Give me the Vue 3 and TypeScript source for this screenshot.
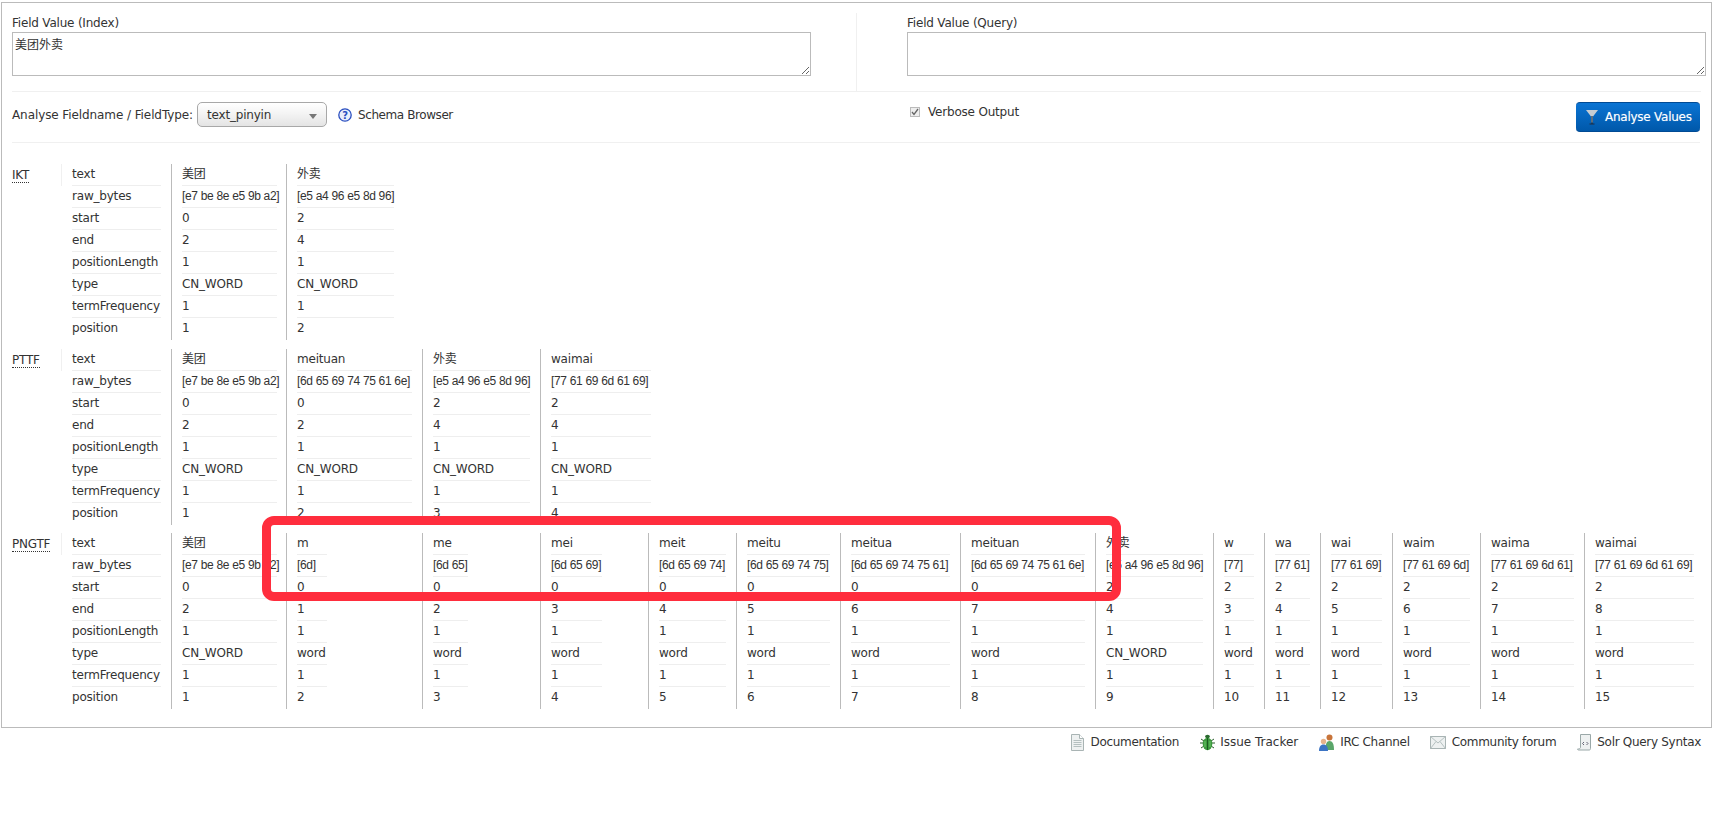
<script setup lang="ts">
interface Token {
  text: string
  raw: string
  start: number
  end: number
  type: string
  position: number
  width: number
  rule: number
}

const keys = ['text', 'raw_bytes', 'start', 'end', 'positionLength', 'type', 'termFrequency', 'position']

const tok = (
  text: string,
  raw: string,
  start: number,
  end: number,
  type: string,
  position: number,
  width: number,
  rule: number,
): Token => ({ text, raw, start, end, type, position, width, rule })

const mei = '美团'
const wai = '外卖'
const meiRaw = '[e7 be 8e e5 9b a2]'
const waiRaw = '[e5 a4 96 e5 8d 96]'

const stages: { name: string; tokens: Token[] }[] = [
  {
    name: 'IKT',
    tokens: [
      tok(mei, meiRaw, 0, 2, 'CN_WORD', 1, 115, 95),
      tok(wai, waiRaw, 2, 4, 'CN_WORD', 2, 118, 97),
    ],
  },
  {
    name: 'PTTF',
    tokens: [
      tok(mei, meiRaw, 0, 2, 'CN_WORD', 1, 115, 95),
      tok('meituan', '[6d 65 69 74 75 61 6e]', 0, 2, 'CN_WORD', 2, 136, 115),
      tok(wai, waiRaw, 2, 4, 'CN_WORD', 3, 118, 97),
      tok('waimai', '[77 61 69 6d 61 69]', 2, 4, 'CN_WORD', 4, 120, 100),
    ],
  },
  {
    name: 'PNGTF',
    tokens: [
      tok(mei, meiRaw, 0, 2, 'CN_WORD', 1, 115, 95),
      tok('m', '[6d]', 0, 1, 'word', 2, 136, 30),
      tok('me', '[6d 65]', 0, 2, 'word', 3, 118, 35),
      tok('mei', '[6d 65 69]', 0, 3, 'word', 4, 108, 51),
      tok('meit', '[6d 65 69 74]', 0, 4, 'word', 5, 88, 67),
      tok('meitu', '[6d 65 69 74 75]', 0, 5, 'word', 6, 104, 83),
      tok('meitua', '[6d 65 69 74 75 61]', 0, 6, 'word', 7, 120, 99),
      tok('meituan', '[6d 65 69 74 75 61 6e]', 0, 7, 'word', 8, 135, 114),
      tok(wai, waiRaw, 2, 4, 'CN_WORD', 9, 118, 97),
      tok('w', '[77]', 2, 3, 'word', 10, 51, 30),
      tok('wa', '[77 61]', 2, 4, 'word', 11, 56, 35),
      tok('wai', '[77 61 69]', 2, 5, 'word', 12, 72, 51),
      tok('waim', '[77 61 69 6d]', 2, 6, 'word', 13, 88, 67),
      tok('waima', '[77 61 69 6d 61]', 2, 7, 'word', 14, 104, 83),
      tok('waimai', '[77 61 69 6d 61 69]', 2, 8, 'word', 15, 110, 99),
    ],
  },
]

const cellValues = (t: Token): (string | number)[] => [t.text, t.raw, t.start, t.end, 1, t.type, 1, t.position]
</script>

<template>
  <div class="page">
    <div class="frame">
      <div class="fields">
        <div class="field field-index">
          <label>Field Value (Index)</label>
          <textarea readonly>美团外卖</textarea>
        </div>
        <div class="field field-query">
          <label>Field Value (Query)</label>
          <textarea readonly></textarea>
        </div>
      </div>

      <div class="controls">
        <div class="controls-left">
          <span class="fieldtype-label">Analyse Fieldname / FieldType:</span>
          <div class="select">
            <span>text_pinyin</span>
            <i class="select-arrow"></i>
          </div>
          <a class="schema">
            <svg width="14" height="14" viewBox="0 0 14 14">
              <circle cx="7" cy="7" r="6.2" fill="#e8eefb" stroke="#2b4fc0" stroke-width="1.3" />
              <text x="7" y="10.6" text-anchor="middle" font-size="10" font-weight="700" fill="#2b4fc0">?</text>
            </svg>
            Schema Browser
          </a>
        </div>
        <div class="verbose">
          <span class="checkbox">
            <svg width="8" height="8" viewBox="0 0 8 8">
              <path d="M1 4l2 2.4L7 1" fill="none" stroke="#666" stroke-width="1.3" />
            </svg>
          </span>
          Verbose Output
        </div>
        <button class="analyse">
          <svg width="12" height="16" viewBox="0 0 12 16">
            <path d="M0 1h12L7 7.500v6H5v-6z" fill="#c6ccd2" />
            <path d="M6 7v8" stroke="#1c2f44" stroke-width="1.2" />
            <path d="M3.500 15h5" stroke="#1c2f44" stroke-width="1" />
          </svg>
          Analyse Values
        </button>
      </div>

      <div class="analysis">
        <div v-for="stage in stages" :key="stage.name" class="stage">
          <div class="stage-name"><abbr>{{ stage.name }}</abbr></div>
          <div class="keys">
            <div v-for="k in keys" :key="k" class="cell">{{ k }}</div>
          </div>
          <div
            v-for="(t, i) in stage.tokens"
            :key="i"
            class="token"
            :style="{ width: t.width + 'px' }"
          >
            <div class="token-cells" :style="{ width: t.rule + 'px' }">
              <div
                v-for="(v, n) in cellValues(t)"
                :key="n"
                class="cell"
                :class="{ raw: n === 1 }"
              >{{ v }}</div>
            </div>
          </div>
        </div>
      </div>
    </div>

    <div class="footer">
      <a>
        <svg width="15" height="17" viewBox="0 0 15 17">
          <path d="M1.500.5h8l4 4v12h-12z" fill="#eef1f1" stroke="#a9b4b4" />
          <path d="M9.500.5v4h4" fill="#fff" stroke="#a9b4b4" />
          <path d="M3.500 6.500h8M3.500 8.500h8M3.500 10.500h8M3.500 12.500h8" stroke="#b5c0c0" />
        </svg>
        Documentation
      </a>
      <a class="issue">
        <svg width="15" height="17" viewBox="0 0 15 17">
          <path d="M1 5l3 2M14 5l-3 2M0 9h3M15 9h-3M1 14l3-2M14 14l-3-2" stroke="#2c5a2c" />
          <ellipse cx="7.500" cy="2.600" rx="2.400" ry="1.800" fill="#2a6a2e" />
          <ellipse cx="7.500" cy="10" rx="4.800" ry="6.200" fill="#3c9a3e" />
          <path d="M7.500 4v12" stroke="#1d5a22" />
          <path d="M5 7v6M10 7v6" stroke="#6cc46a" />
        </svg>
        Issue Tracker
      </a>
      <a>
        <svg width="16" height="17" viewBox="0 0 16 17">
          <circle cx="10.500" cy="3.500" r="3" fill="#c8743a" />
          <path d="M6.500 16c0-6 1-9 4-9s4.500 3 4.500 9z" fill="#5aa66a" />
          <circle cx="4.500" cy="7.500" r="2.700" fill="#e8b48c" />
          <path d="M0 17c0-4 1.500-6.500 4.500-6.500S9 13 9 17z" fill="#3c74c4" />
        </svg>
        IRC Channel
      </a>
      <a>
        <svg width="16" height="13" viewBox="0 0 16 13">
          <rect x=".5" y=".5" width="15" height="12" fill="#eef1f1" stroke="#a9b4b4" />
          <path d="M.5.500L8 7l7.500-6.500M.5 12.500L6 5.500M15.500 12.500L10 5.500" fill="none" stroke="#b5c0c0" />
        </svg>
        Community forum
      </a>
      <a>
        <svg width="15" height="17" viewBox="0 0 15 17">
          <path d="M3.500.5h10v14c0 1-.5 1.500-1.500 1.500H1.500c-.5 0-1-.5-1-1 1.500 0 3-.5 3-1.500z" fill="#eef1f1" stroke="#9aa8a8" />
          <path d="M7 8L5.500 9.500 7 11M9.500 8L11 9.500 9.500 11" fill="none" stroke="#667" />
        </svg>
        Solr Query Syntax
      </a>
    </div>

    <div class="highlight"></div>
  </div>
</template>

<style>
html,
body {
  background: #fff;
}
</style>

<style scoped>
.page {
  position: relative;
  height: 820px;
  overflow: hidden;
  font-family: 'DejaVu Sans', 'Noto Sans CJK SC', sans-serif;
  font-size: 12px;
  letter-spacing: -0.2px;
  color: #333;
}

.frame {
  box-sizing: border-box;
  width: 1711px;
  height: 726px;
  margin: 2px 0 0 1px;
  padding: 10px 10px 0;
  border: 1px solid #bbb;
}

.fields {
  display: flex;
  height: 78px;
  border-bottom: 1px solid #f0f0f0;
}

.field {
  flex: none;
}

.field label {
  display: block;
  height: 19px;
  padding-top: 1px;
  box-sizing: border-box;
  line-height: 19px;
}

.field textarea {
  display: block;
  box-sizing: border-box;
  width: 799px;
  height: 44px;
  margin: 0;
  padding: 2px;
  border: 1px solid #bbb;
  outline: none;
  font: inherit;
  letter-spacing: 0;
  color: #333;
}

.field-index {
  box-sizing: border-box;
  width: 845px;
  border-right: 1px solid #f0f0f0;
}

.field-query {
  padding-left: 50px;
}

.controls {
  display: flex;
  align-items: flex-start;
  box-sizing: border-box;
  width: 1688px;
  height: 51px;
  padding-top: 10px;
  border-bottom: 1px solid #f0f0f0;
}

.controls-left {
  display: flex;
  align-items: center;
  gap: 4px;
  width: 898px;
  height: 25px;
}

.fieldtype-label {
  letter-spacing: -0.09px;
}

.select {
  display: flex;
  align-items: center;
  justify-content: space-between;
  box-sizing: border-box;
  width: 130px;
  height: 25px;
  padding: 0 9px;
  border: 1px solid #a8a8a8;
  border-radius: 5px;
  background: linear-gradient(#fff, #f4f4f4 45%, #e4e4e4);
}

.select-arrow {
  width: 0;
  height: 0;
  margin-top: 3px;
  border: 4px solid transparent;
  border-top: 5px solid #777;
  border-bottom: 0;
}

.schema {
  display: flex;
  align-items: center;
  gap: 6px;
  margin-left: 7px;
  letter-spacing: -0.42px;
}

.verbose {
  display: flex;
  align-items: center;
  gap: 8px;
  height: 19px;
}

.checkbox {
  display: flex;
  align-items: center;
  justify-content: center;
  box-sizing: border-box;
  width: 10px;
  height: 10px;
  border: 1px solid #bbb;
  background: #eee;
}

.analyse {
  display: flex;
  align-items: center;
  gap: 7px;
  box-sizing: border-box;
  width: 124px;
  height: 30px;
  margin-left: auto;
  padding: 0 0 0 10px;
  border: 0;
  border-top: 1px solid #004a94;
  border-bottom: 1px solid #004a94;
  border-radius: 4px;
  background: linear-gradient(#0a74d4, #0058aa);
  font: inherit;
  letter-spacing: -0.25px;
  color: #fff;
  text-shadow: 0 0 1px rgba(255, 255, 255, 0.4);
}

.analysis {
  padding-top: 21px;
}

.stage {
  display: flex;
  align-items: flex-start;
  margin-bottom: 8.500px;
}

.stage-name {
  flex: none;
  box-sizing: border-box;
  width: 50px;
  height: 22px;
  line-height: 22px;
  border-right: 1px solid #f0f0f0;
}

.stage-name abbr {
  border-bottom: 1px dotted #333;
}

.keys {
  flex: none;
  box-sizing: border-box;
  width: 109px;
  padding: 0 10px;
}

.token {
  flex: none;
  box-sizing: border-box;
  height: 176px;
  padding-left: 10px;
  border-left: 1px solid #bbb;
}

.stage .token:first-of-type {
  border-left-color: #ddd;
}

.cell {
  box-sizing: border-box;
  height: 22px;
  line-height: 21px;
  white-space: nowrap;
  border-bottom: 1px solid #eee;
}

.cell:last-child {
  border-bottom: 0;
}

.raw {
  font-family: 'Liberation Sans', sans-serif;
  letter-spacing: -0.32px;
}

.footer {
  display: flex;
  justify-content: flex-end;
  gap: 20.500px;
  width: 1701px;
  margin-top: 4px;
  letter-spacing: -0.3px;
}

.footer a {
  display: flex;
  align-items: center;
  gap: 5.500px;
  height: 20px;
}

.footer a.issue {
  letter-spacing: 0;
}

.highlight {
  position: absolute;
  left: 262px;
  top: 516px;
  box-sizing: border-box;
  width: 859px;
  height: 85px;
  border: 9px solid #ff2d3d;
  border-radius: 12px;
}
</style>
